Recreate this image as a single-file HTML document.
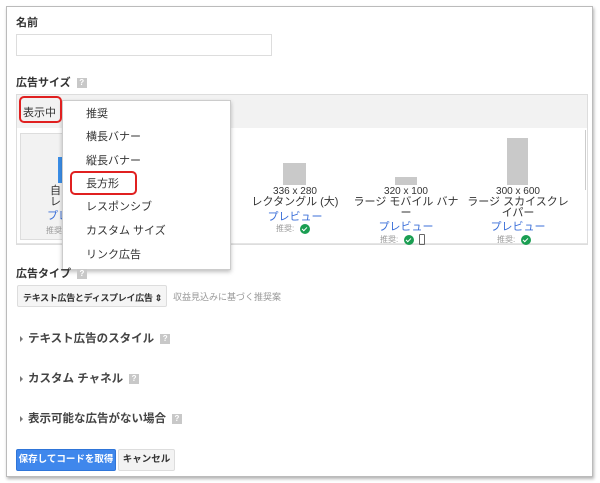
<!DOCTYPE html>
<html><head><meta charset="utf-8"><style>
*{box-sizing:border-box;margin:0;padding:0}
body{width:600px;height:483px;background:#fff;font-family:"Liberation Sans","Noto Sans CJK JP",sans-serif;position:relative;overflow:hidden;color:#222}
.frame{position:absolute;left:6px;top:6px;width:587px;height:471px;border:1px solid #bbb;box-shadow:1px 2px 3px rgba(0,0,0,.3);background:#fff}
.a{position:absolute;white-space:nowrap}
.b{font-weight:bold;font-size:11px;color:#333}
.help{display:inline-block;width:10px;height:10px;background:#c8c8c8;color:#fff;font-size:8px;line-height:10px;text-align:center;font-weight:bold;vertical-align:middle;margin-left:6px}
.t{font-size:10px;color:#333;text-align:center;line-height:11px}
.lk{color:#3b6fd8;font-size:11px;text-align:center}
.rec{font-size:8px;color:#999}
.chk{display:inline-block;width:10px;height:10px;border-radius:50%;background:#1a9e52;vertical-align:middle;margin-left:6px;position:relative}
.chk:after{content:"";position:absolute;left:3px;top:2px;width:2px;height:4px;border:solid #fff;border-width:0 1.5px 1.5px 0;transform:rotate(45deg)}
.gr{position:absolute;background:#c9c9c9}
.mi{position:absolute;left:86px;font-size:11px;color:#333}
.row{font-size:11.5px;font-weight:bold;color:#444}
.tri{display:inline-block;width:0;height:0;border-left:3px solid #777;border-top:3px solid transparent;border-bottom:3px solid transparent;margin-right:5px;vertical-align:middle}
</style></head><body>
<div class="frame"></div>
<div class="a b" style="left:16px;top:14px">名前</div>
<div class="a" style="left:16px;top:34px;width:256px;height:22px;border:1px solid #ddd"></div>
<div class="a b" style="left:16px;top:74px">広告サイズ<span class="help">?</span></div>
<div class="a" style="left:16px;top:94px;width:572px;height:151px;border:1px solid #ddd;background:#f2f2f2"></div>
<div class="a" style="left:17px;top:128px;width:570px;height:116px;background:#fff"></div>
<div class="a" style="left:20px;top:133px;width:60px;height:107px;background:#f2f2f2;border:1px solid #ddd"></div>
<div class="a" style="left:58px;top:157px;width:4px;height:26px;background:#3b8ee8"></div>
<div class="a t" style="left:50px;top:186px;text-align:left;font-size:11px">自<br>レス</div>
<div class="a lk" style="left:47px;top:207px">プレ</div>
<div class="a rec" style="left:46px;top:225px">推奨</div>
<div class="a" style="left:585px;top:130px;width:1px;height:60px;background:#ccc"></div>
<div class="a" style="left:17px;top:243px;width:570px;height:1px;background:#e5e5e5"></div>

<div class="gr" style="left:283px;top:163px;width:23px;height:22px"></div>
<div class="a t" style="left:235px;top:186px;width:120px">336 x 280<br><span style="font-size:11px">レクタングル (大)</span></div>
<div class="a lk" style="left:235px;top:208px;width:120px">プレビュー</div>
<div class="a rec" style="left:276px;top:223px">推奨:<span class="chk"></span></div>

<div class="gr" style="left:395px;top:177px;width:22px;height:8px"></div>
<div class="a t" style="left:346px;top:186px;width:120px">320 x 100<br><span style="font-size:11px">ラージ モバイル バナ<br>ー</span></div>
<div class="a lk" style="left:346px;top:218px;width:120px">プレビュー</div>
<div class="a rec" style="left:380px;top:234px">推奨:<span class="chk"></span><span style="display:inline-block;width:6px;height:11px;border:1px solid #666;border-radius:1px;margin-left:5px;vertical-align:middle"></span></div>

<div class="gr" style="left:507px;top:138px;width:21px;height:47px"></div>
<div class="a t" style="left:458px;top:186px;width:120px">300 x 600<br><span style="font-size:11px">ラージ スカイスクレ<br>イパー</span></div>
<div class="a lk" style="left:458px;top:218px;width:120px">プレビュー</div>
<div class="a rec" style="left:497px;top:234px">推奨:<span class="chk"></span></div>

<div class="a" style="left:62px;top:100px;width:169px;height:170px;background:#fff;border:1px solid #ccc;box-shadow:0 2px 4px rgba(0,0,0,.25)"></div>
<div class="a" style="left:23px;top:104px;font-size:11px;color:#333">表示中</div>
<div class="a" style="left:19px;top:96px;width:43px;height:27px;border:2px solid #e02020;border-radius:5px"></div>
<div class="mi" style="top:105px">推奨</div>
<div class="mi" style="top:128px">横長バナー</div>
<div class="mi" style="top:152px">縦長バナー</div>
<div class="mi" style="top:175px">長方形</div>
<div class="mi" style="top:198px">レスポンシブ</div>
<div class="mi" style="top:222px">カスタム サイズ</div>
<div class="mi" style="top:246px">リンク広告</div>
<div class="a" style="left:70px;top:171px;width:67px;height:24px;border:2px solid #e02020;border-radius:5px"></div>

<div class="a b" style="left:16px;top:265px">広告タイプ<span class="help">?</span></div>
<div class="a" style="left:17px;top:285px;width:150px;height:22px;border:1px solid #ddd;background:#f5f5f5;border-radius:2px;font-size:9px;font-weight:bold;color:#333;padding:5px 0 0 5px;letter-spacing:-0.3px">テキスト広告とディスプレイ広告 ⇕</div>
<div class="a" style="left:173px;top:290px;font-size:9px;color:#999">収益見込みに基づく推奨案</div>

<div class="a row" style="left:20px;top:330px"><span class="tri"></span>テキスト広告のスタイル<span class="help">?</span></div>
<div class="a row" style="left:20px;top:370px"><span class="tri"></span>カスタム チャネル<span class="help">?</span></div>
<div class="a row" style="left:20px;top:410px"><span class="tri"></span>表示可能な広告がない場合<span class="help">?</span></div>

<div class="a" style="left:16px;top:449px;width:100px;height:22px;background:#3f87ec;border:1px solid #2f75d8;border-radius:2px;color:#fff;font-size:9.5px;font-weight:bold;text-align:center;line-height:20px">保存してコードを取得</div>
<div class="a" style="left:118px;top:449px;width:57px;height:22px;background:#f3f3f3;border:1px solid #ddd;border-radius:2px;color:#333;font-size:9.5px;font-weight:bold;text-align:center;line-height:20px">キャンセル</div>
</body></html>
